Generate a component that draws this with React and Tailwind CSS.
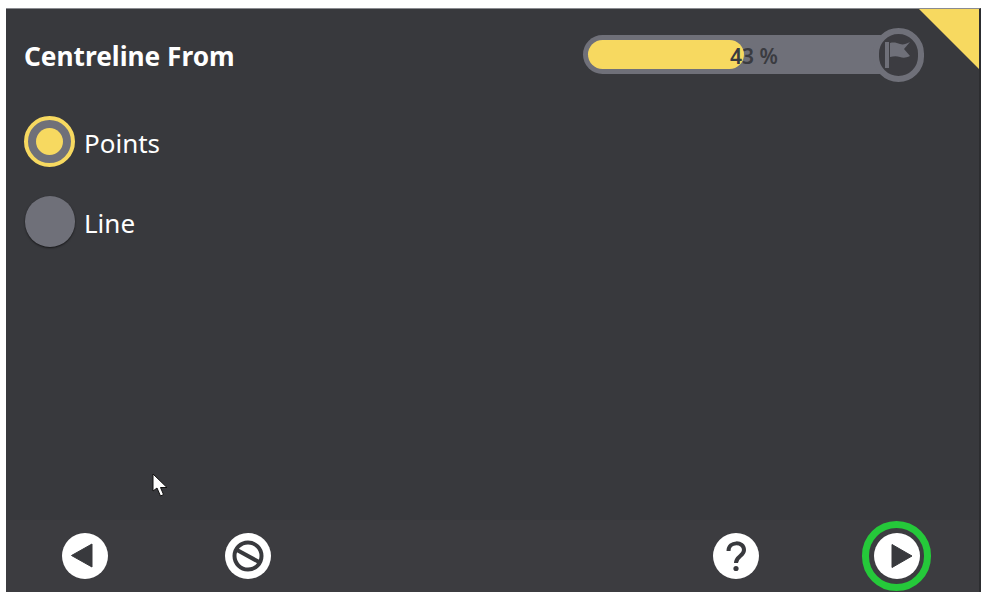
const fontStack = { fontFamily: '"Noto Sans", sans-serif' };

const RoundButton = ({ children }) => (
  <div className="flex h-[46px] w-[46px] items-center justify-center rounded-full bg-white">
    <svg viewBox="0 0 46 46" className="h-[46px] w-[46px]">
      {children}
    </svg>
  </div>
);

const Radio = ({ label, selected }) => (
  <div className="flex items-center gap-[9px]">
    {selected ? (
      <div className="flex h-[51px] w-[51px] items-center justify-center rounded-full border-4 border-[#f7d960] bg-[#6f7079]">
        <div className="h-[27px] w-[27px] rounded-full bg-[#f7d960]" />
      </div>
    ) : (
      <div className="ml-[1px] h-[51px] w-[50px] rounded-full bg-[#6f7079] shadow-[0_1px_2px_rgba(0,0,0,0.6)]" />
    )}
    <span className="pt-[2px] text-[26px] leading-[34px] text-white">{label}</span>
  </div>
);

const ProgressBar = ({ value }) => (
  <div className="relative h-[39px] w-[316px] rounded-full bg-[#6f7079]">
    <div className="absolute left-[5px] top-[5px] h-[29px] rounded-full bg-[#f7d960]" style={{ width: `${value * 3.63}px` }} />
    <span className="absolute left-[147px] top-[6px] text-[21px] font-semibold leading-[30px] text-[#3a3b40]">{value} %</span>
    <div className="absolute right-[-25px] top-[-7px] flex h-[54px] w-[51px] items-center justify-center rounded-full border-[6px] border-[#6f7079] bg-[#3c3c41]">
      <svg viewBox="0 0 32 32" className="h-[32px] w-[32px] shrink-0" fill="#6f7079">
        <rect x="2" y="3" width="4" height="26" />
        <path d="M7 4 C11 3 14 4 17 5 C20 6 23 5 27 3 L21 10 L27 17 C23 19 20 19 17 18 C14 17 11 17 7 18 Z" />
      </svg>
    </div>
  </div>
);

export default function App() {
  return (
    <div className="h-[597px] w-[986px] bg-white pb-[5px] pl-[6px] pr-[5px] pt-[8px]" style={fontStack}>
      <div className="relative flex h-full flex-col overflow-hidden border-r-[2px] border-t border-r-[#2c2d30] border-t-[#8a8b90] bg-[#38393d]">
        <div className="absolute right-0 top-0 h-0 w-0 border-l-[60px] border-t-[60px] border-l-transparent border-t-[#f7d960]" />
        {/* light part of the thin strip on the right edge */}
        <div className="absolute right-[-2px] top-0 h-[282px] w-[2px] bg-[#8a8b90]" />

        <div className="flex flex-1 flex-col pl-[18px]">
          <div className="flex items-start justify-between pr-[80px] pt-[26px]">
            <h1 className="text-[26.25px] font-bold leading-[42px] text-white">Centreline From</h1>
            <ProgressBar value={43} />
          </div>
          <div className="mt-[39px] flex flex-col gap-[29px]">
            <Radio label="Points" selected />
            <Radio label="Line" />
          </div>
        </div>

        <div className="flex h-[72px] items-center justify-between bg-[#3c3c40] pl-[56px] pr-[48px]">
          <div className="flex items-center gap-[117px]">
            <RoundButton>
              <path d="M9.5 22.5 L30 11 V34 Z" fill="#38393d" stroke="#38393d" strokeWidth="1" strokeLinejoin="round" />
            </RoundButton>
            <RoundButton>
              <circle cx="23" cy="23" r="13.5" fill="none" stroke="#38393d" strokeWidth="4" />
              <path d="M12 17 L34 29" stroke="#38393d" strokeWidth="4" />
            </RoundButton>
          </div>
          <div className="flex items-center gap-[103px]">
            <RoundButton>
              <path d="M15.5 18 C15.5 8 31 8 31 17 C31 23 23 23 23 30" fill="none" stroke="#38393d" strokeWidth="4" />
              <circle cx="23" cy="35.5" r="2.6" fill="#38393d" />
            </RoundButton>
            <div className="flex h-[70px] w-[69px] items-center justify-center rounded-full border-[7px] border-[#25c93a]">
              <RoundButton>
                <path d="M18 11.5 L38 23 L18 34.5 Z" fill="#38393d" stroke="#38393d" strokeWidth="1" strokeLinejoin="round" />
              </RoundButton>
            </div>
          </div>
        </div>

        {/* mouse pointer captured in the screenshot */}
        <svg viewBox="0 0 16 24" className="absolute left-[146px] top-[464px] h-[24px] w-[16px]">
          <path d="M1 1 V18 L5 15 L8.5 23 L11.5 21.5 L8.5 14.5 H15 Z" fill="white" stroke="#111" strokeWidth="1" />
        </svg>
      </div>
    </div>
  );
}
